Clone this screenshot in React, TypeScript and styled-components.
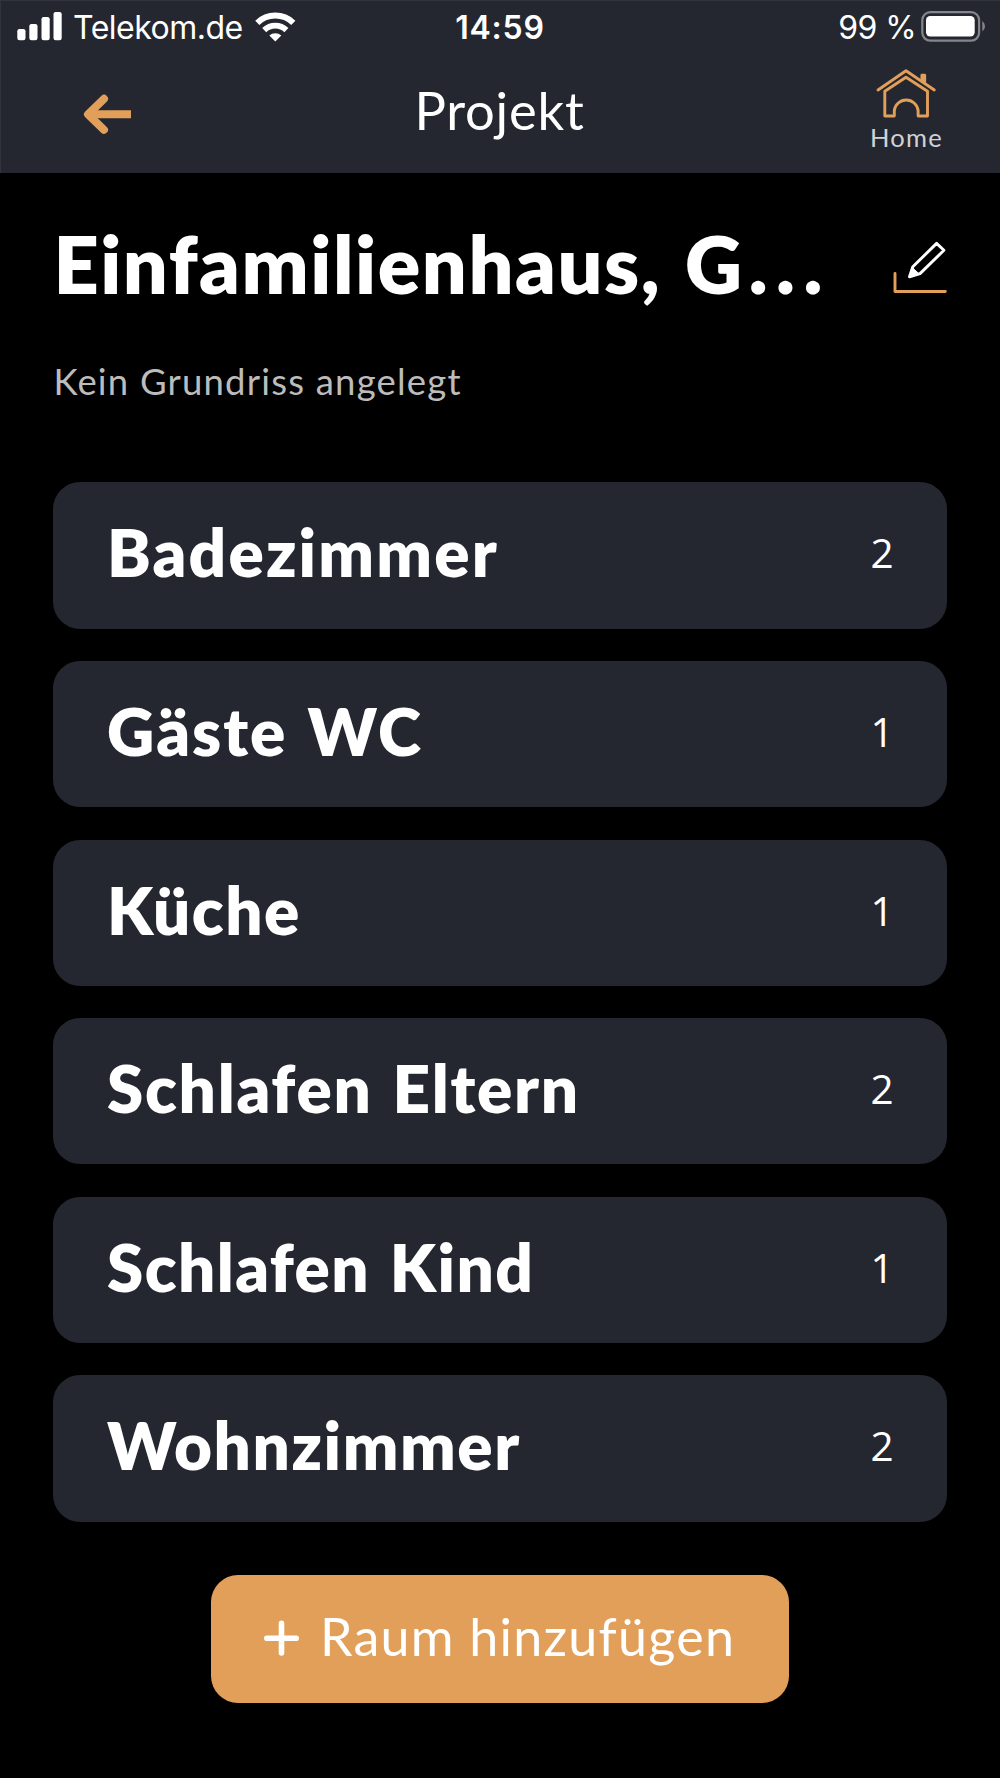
import React from "react";
import styled, { createGlobalStyle } from "styled-components";

const color = {
  panel: "#252730",
  edge: "#31343d",
  accent: "#e29f5a",
  muted: "#bcbcbc",
};

const GlobalStyle = createGlobalStyle`
  *, *::before, *::after { box-sizing: border-box; }
  body { margin: 0; background: #000; }
  button { border: 0; padding: 0; background: none; font: inherit; color: inherit; }
  h1, h2, p, ul { margin: 0; padding: 0; }
  svg { display: block; flex: none; }
`;

const Screen = styled.div`
  display: flex;
  flex-direction: column;
  width: 1000px;
  height: 1778px;
  overflow: hidden;
  background: #000;
  color: #fff;
  font-family: Lato, "Open Sans", sans-serif;
`;

const Header = styled.header`
  height: 173px;
  background: ${color.panel};
  box-shadow: inset 1px 1px 0 ${color.edge};
`;

const StatusBar = styled.div`
  display: grid;
  grid-template-columns: 1fr auto 1fr;
  height: 55px;
  padding: 0 15px 0 17px;
  font-family: Inter, "Liberation Sans", sans-serif;
  font-size: 32px;
  line-height: 56px;
`;

const StatusGroup = styled.div<{ $end?: boolean }>`
  display: flex;
  justify-content: ${(p) => (p.$end ? "flex-end" : "flex-start")};
`;

const Carrier = styled.span`
  margin: 0 11px 0 11px;
  letter-spacing: -0.5px;
`;

const Clock = styled.time`
  margin-right: 2px;
  font-weight: 600;
  letter-spacing: 0.8px;
`;

const Charge = styled.span`
  margin-right: 5px;
  letter-spacing: -0.6px;
  white-space: pre;
`;

const NavBar = styled.nav`
  display: grid;
  grid-template-columns: 1fr auto 1fr;
  height: 118px;
  padding: 0 54px;
`;

const BackButton = styled.button`
  justify-self: start;
  align-self: start;
  margin: 35px 0 0 26px;
`;

const NavTitle = styled.h1`
  margin-right: 1px;
  font-size: 52.5px;
  font-weight: 400;
  line-height: 110px;
  letter-spacing: 0.8px;
`;

const HomeButton = styled.button`
  display: flex;
  flex-direction: column;
  align-items: center;
  justify-self: end;
  align-self: start;
  width: 80px;
  padding-top: 12px;
`;

const HomeLabel = styled.span`
  margin: 3px 0 0 1px;
  color: #d2d2d5;
  font-size: 25.5px;
  line-height: 30px;
  letter-spacing: 1.3px;
`;

const Main = styled.main`
  display: flex;
  flex-direction: column;
  padding: 45px 53.4px 0;
`;

const ProjectRow = styled.div`
  display: flex;
  align-items: center;
  justify-content: space-between;
  height: 91px;
`;

const ProjectName = styled.h2`
  font-size: 79px;
  font-weight: 800;
  line-height: 91px;
  letter-spacing: 1.55px;
  word-spacing: 4px;
  white-space: nowrap;
`;

const Ellipsis = styled.span`
  margin-left: 5px;
  letter-spacing: 8.5px;
`;

const EditButton = styled.button`
  padding-top: 7px;
`;

const PlanNote = styled.p`
  margin-top: 50px;
  color: ${color.muted};
  font-size: 36.5px;
  line-height: 45px;
  letter-spacing: 1.2px;
`;

const RoomList = styled.ul`
  display: flex;
  flex-direction: column;
  gap: 32.3px;
  margin-top: 78.4px;
  list-style: none;
`;

const RoomCard = styled.li`
  display: flex;
  justify-content: space-between;
  height: 146.3px;
  padding: 0 53px 0 53.5px;
  border-radius: 27px;
  background: ${color.panel};
`;

const RoomName = styled.span<{ $tracking: number }>`
  font-size: 65.5px;
  font-weight: 800;
  line-height: 139px;
  letter-spacing: ${(p) => p.$tracking}px;
  word-spacing: 3px;
`;

const RoomCount = styled.span`
  font-family: "Open Sans", "Noto Sans", sans-serif;
  font-size: 40.5px;
  font-weight: 500;
  line-height: 141px;
`;

const AddButton = styled.button`
  display: flex;
  align-self: center;
  align-items: center;
  width: 578px;
  height: 128px;
  margin-top: 53.8px;
  padding-left: 52px;
  border-radius: 27px;
  background: ${color.accent};
`;

const AddLabel = styled.span`
  margin: 0 0 6px 19px;
  font-size: 52px;
  line-height: 62px;
  letter-spacing: 1.25px;
  white-space: nowrap;
`;

const SignalIcon = () => (
  <svg width="45" height="55" viewBox="17 0 45 55" fill="#fff">
    <rect x="17.3" y="29" width="8.2" height="11.3" rx="2.2" />
    <rect x="29.3" y="24" width="8.2" height="16.3" rx="2.2" />
    <rect x="41.5" y="17" width="8.2" height="23.3" rx="2.2" />
    <rect x="53.5" y="12" width="8.2" height="28.3" rx="2.2" />
  </svg>
);

const WifiIcon = () => (
  <svg width="42" height="55" viewBox="254 0 42 55" fill="none" stroke="#fff">
    <path d="M257.3 22.8A26 26 0 0 1 293.3 22.8" strokeWidth="6" />
    <path d="M264.2 30.1A16 16 0 0 1 286.4 30.1" strokeWidth="5.8" />
    <path d="M269.3 35.6A9 9 0 0 1 281.3 35.6L275.3 41.6Z" fill="#fff" stroke="none" />
  </svg>
);

const BatteryIcon = () => (
  <svg width="64" height="55" viewBox="921 0 64 55">
    <rect x="922.3" y="12.1" width="56.8" height="28.6" rx="8" fill="none" stroke="#85868c" strokeWidth="2.2" />
    <rect x="926" y="16" width="48.7" height="20.5" rx="4.2" fill="#fff" />
    <path d="M982.3 21V31.4Q985 29.6 985 26.2T982.3 21Z" fill="#85868c" />
  </svg>
);

const ArrowIcon = () => (
  <svg width="52" height="48" viewBox="80 90 52 48" fill="none" stroke={color.accent} strokeWidth="8" strokeLinejoin="round">
    <path d="M131 114.3H89" />
    <path d="M104 98.8L88 114.3L104 129.8" strokeLinecap="round" />
  </svg>
);

const HomeIcon = () => (
  <svg width="64" height="52" viewBox="874.5 67 64 52" fill="none" stroke={color.accent} strokeWidth="2.9" strokeLinecap="round" strokeLinejoin="round">
    <path d="M878.5 90L906.5 70.8L934.8 90" />
    <path d="M885.3 91.3L906.5 77.3L928 91.3V116H918.6V110.5A12 12 0 0 0 894.8 110.5V116H885.3Z" />
    <path d="M922.4 80V75.2H925.2V82Z" fill={color.accent} />
  </svg>
);

const EditIcon = () => (
  <svg width="56" height="56" viewBox="891 239 56 56" fill="none" strokeWidth="2.9" strokeLinecap="round" strokeLinejoin="round">
    <path d="M895 273.5V291.5H945.3" stroke={color.accent} />
    <path d="M909.5 276.8L912.8 266.8L936.6 243.4L943.9 250.3L920 273.6Z" stroke="#fff" />
    <path d="M909.5 276.8L912.4 267.6L919 273.8Z" fill="#fff" stroke="#fff" strokeWidth="1" />
  </svg>
);

const PlusIcon = () => (
  <svg width="38" height="38" viewBox="0 0 38 38" stroke="#fff" strokeWidth="5.6" strokeLinecap="round">
    <path d="M3.8 18.2H33.2M18.5 3.4V33" />
  </svg>
);

const rooms = [
  { name: "Badezimmer", count: 2, tracking: 2.2 },
  { name: "Gäste WC", count: 1, tracking: 2 },
  { name: "Küche", count: 1, tracking: 1.5 },
  { name: "Schlafen Eltern", count: 2, tracking: 1.75 },
  { name: "Schlafen Kind", count: 1, tracking: 1.45 },
  { name: "Wohnzimmer", count: 2, tracking: 1.6 },
];

export default function App() {
  return (
    <Screen>
      <GlobalStyle />
      <Header>
        <StatusBar>
          <StatusGroup>
            <SignalIcon />
            <Carrier>Telekom.de</Carrier>
            <WifiIcon />
          </StatusGroup>
          <Clock>14:59</Clock>
          <StatusGroup $end>
            <Charge>99 %</Charge>
            <BatteryIcon />
          </StatusGroup>
        </StatusBar>
        <NavBar>
          <BackButton aria-label="Zurück">
            <ArrowIcon />
          </BackButton>
          <NavTitle>Projekt</NavTitle>
          <HomeButton>
            <HomeIcon />
            <HomeLabel>Home</HomeLabel>
          </HomeButton>
        </NavBar>
      </Header>
      <Main>
        <ProjectRow>
          <ProjectName>
            Einfamilienhaus, G<Ellipsis>...</Ellipsis>
          </ProjectName>
          <EditButton aria-label="Bearbeiten">
            <EditIcon />
          </EditButton>
        </ProjectRow>
        <PlanNote>Kein Grundriss angelegt</PlanNote>
        <RoomList>
          {rooms.map((room) => (
            <RoomCard key={room.name}>
              <RoomName $tracking={room.tracking}>{room.name}</RoomName>
              <RoomCount>{room.count}</RoomCount>
            </RoomCard>
          ))}
        </RoomList>
        <AddButton>
          <PlusIcon />
          <AddLabel>Raum hinzufügen</AddLabel>
        </AddButton>
      </Main>
    </Screen>
  );
}
